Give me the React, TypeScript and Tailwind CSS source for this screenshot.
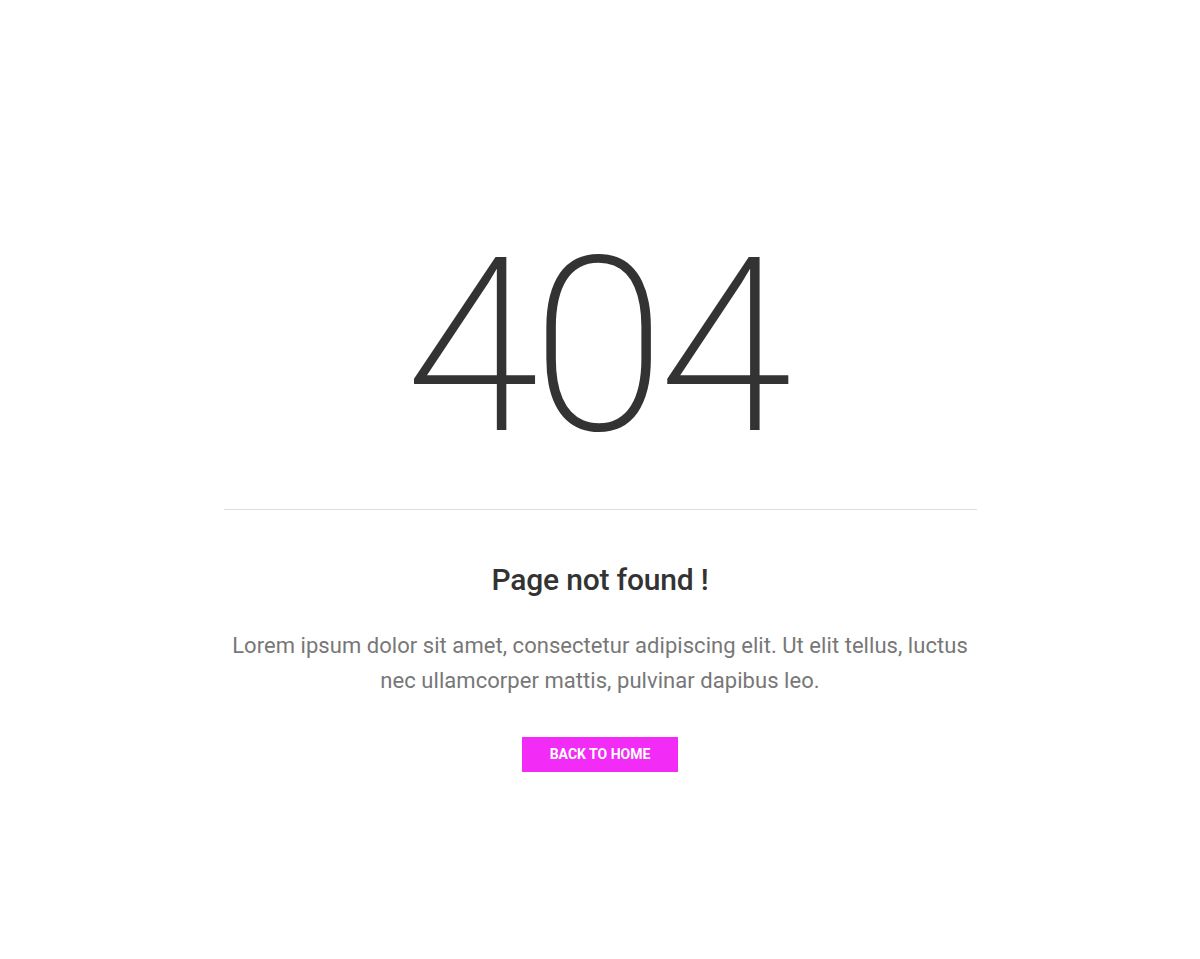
export default function App() {
  return (
    <div className="min-h-[959px] w-full bg-white flex flex-col items-center pt-[222px] font-['Roboto',sans-serif]">
      <div className="w-[753px] flex flex-col items-center">
        <h1 className="pr-[10px] text-[243px] leading-[250px] font-[160] text-[#333333] tracking-[-7px]">404</h1>
        <div className="w-full h-px bg-[#dddddd] mt-[37px]" />
        <h2 className="mt-[52px] text-[30px] leading-[36px] font-medium text-[#333333] tracking-[-0.2px]">
          Page not found !
        </h2>
        <p className="mt-[30px] text-[22px] leading-[35px] text-[#777777] text-center tracking-[0.05px] whitespace-nowrap">
          Lorem ipsum dolor sit amet, consectetur adipiscing elit. Ut elit tellus, luctus
          <br />
          nec ullamcorper mattis, pulvinar dapibus leo.
        </p>
        <a
          href="#"
          className="mt-[39px] w-[156px] h-[35px] bg-[#f22bf7] text-white text-[14px] font-bold uppercase flex items-center justify-center"
        >
          Back to home
        </a>
      </div>
    </div>
  );
}
